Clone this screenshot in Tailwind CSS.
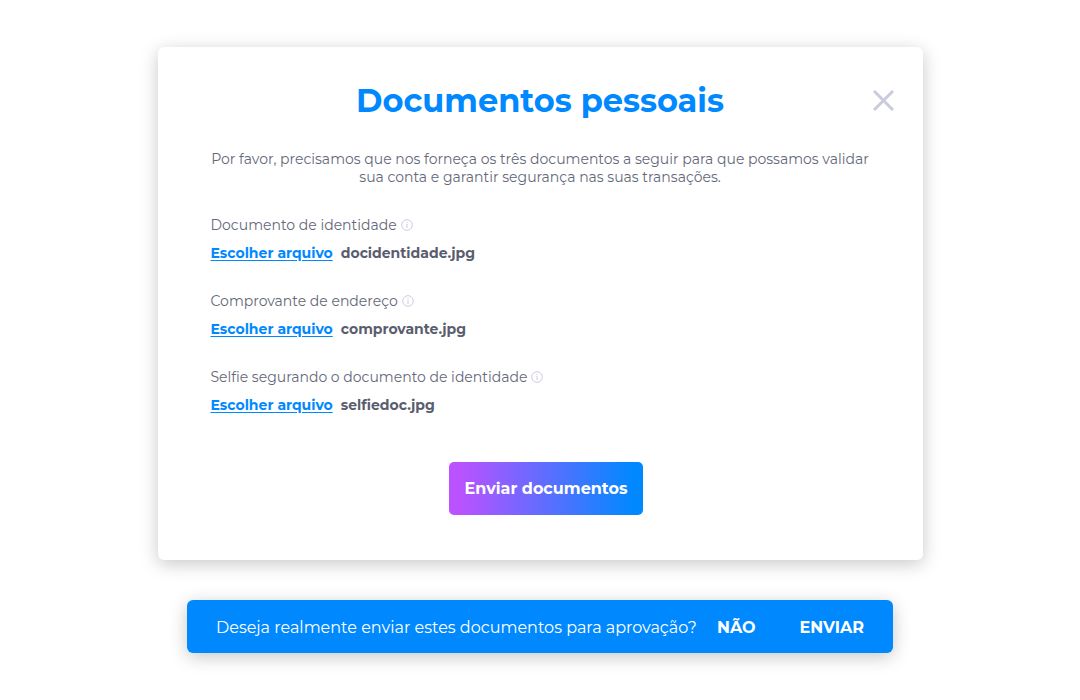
<!DOCTYPE html>
<html lang="pt-BR">
<head>
<meta charset="utf-8">
<meta name="viewport" content="width=device-width, initial-scale=1">
<title>Documentos pessoais</title>
<script src="https://cdn.jsdelivr.net/npm/@tailwindcss/browser@4"></script>
</head>
<body class="min-h-screen bg-white font-['Montserrat','Inter',sans-serif] text-[#646879]">
<main class="flex flex-col items-center gap-10 px-6 pt-[47px] pb-6">
  <section role="dialog" aria-labelledby="titulo" class="relative w-full max-w-[765px] rounded-md bg-white px-[53px] pt-8 pb-[45px] shadow-[0_4px_18px_rgba(0,0,0,0.22)]">
    <button type="button" aria-label="Fechar" class="absolute top-[43px] right-[29px]">
      <svg class="size-[21px]" viewBox="0 0 21 21" fill="none" stroke="#cbcbdf" stroke-width="3"><path d="M1 1l19 19M20 1L1 20"/></svg>
    </button>
    <h1 id="titulo" class="text-center text-[32px] leading-[44px] font-bold text-[#0089ff]">Documentos pessoais</h1>
    <p class="mt-[27px] text-center text-sm leading-[18px]">Por favor, precisamos que nos forneça os três documentos a seguir para que possamos validar sua conta e garantir segurança nas suas transações.</p>
    <div class="mt-[27px] flex flex-col gap-6">
      <div>
        <div class="flex h-6 items-center gap-1 text-sm"><span id="rotulo-identidade">Documento de identidade</span><svg class="size-3" viewBox="0 0 12 12" fill="none" stroke="#cbcbdf"><circle cx="6" cy="6" r="5.3"/><path d="M6 5v4M6 3v1"/></svg></div>
        <div class="mt-1 flex h-6 items-center gap-2 text-sm font-bold text-[#595d6e]"><button type="button" aria-describedby="rotulo-identidade" class="text-[#0089ff] underline underline-offset-2">Escolher arquivo</button><span>docidentidade.jpg</span></div>
      </div>
      <div>
        <div class="flex h-6 items-center gap-1 text-sm"><span id="rotulo-endereco">Comprovante de endereço</span><svg class="size-3" viewBox="0 0 12 12" fill="none" stroke="#cbcbdf"><circle cx="6" cy="6" r="5.3"/><path d="M6 5v4M6 3v1"/></svg></div>
        <div class="mt-1 flex h-6 items-center gap-2 text-sm font-bold text-[#595d6e]"><button type="button" aria-describedby="rotulo-endereco" class="text-[#0089ff] underline underline-offset-2">Escolher arquivo</button><span>comprovante.jpg</span></div>
      </div>
      <div>
        <div class="flex h-6 items-center gap-1 text-sm"><span id="rotulo-selfie">Selfie segurando o documento de identidade</span><svg class="size-3" viewBox="0 0 12 12" fill="none" stroke="#cbcbdf"><circle cx="6" cy="6" r="5.3"/><path d="M6 5v4M6 3v1"/></svg></div>
        <div class="mt-1 flex h-6 items-center gap-2 text-sm font-bold text-[#595d6e]"><button type="button" aria-describedby="rotulo-selfie" class="text-[#0089ff] underline underline-offset-2">Escolher arquivo</button><span>selfiedoc.jpg</span></div>
      </div>
    </div>
    <div class="mt-[45px] flex justify-center pl-3">
      <button type="button" class="h-[53px] rounded-[5px] bg-linear-to-r/srgb from-[#bb52ff] from-5% to-[#0089ff] to-95% px-4 text-base font-bold text-white">Enviar documentos</button>
    </div>
  </section>
  <div role="alertdialog" aria-labelledby="pergunta" class="flex min-h-[53px] w-full max-w-[706px] items-center rounded-md bg-[#0089ff] pt-0.5 pr-[29px] pl-[29px] text-base text-white shadow-[0_4px_18px_rgba(0,0,0,0.22)]">
    <p id="pergunta">Deseja realmente enviar estes documentos para aprovação?</p>
    <button type="button" class="ml-auto font-bold">NÃO</button>
    <button type="button" class="ml-11 font-bold">ENVIAR</button>
  </div>
</main>
</body>
</html>
